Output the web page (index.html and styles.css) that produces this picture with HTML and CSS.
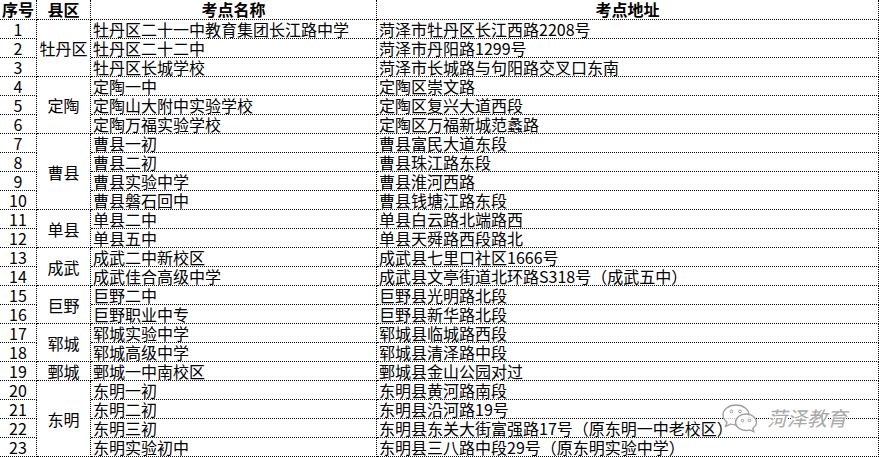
FILE: index.html
```html
<!DOCTYPE html>
<html lang="zh">
<head>
<meta charset="utf-8">
<title>考点</title>
<link rel="stylesheet" href="styles.css">
</head>
<body>
<div class="sheet">
<table class="grid">
<colgroup><col class="c1"><col class="c2"><col class="c3"><col class="c4"></colgroup>
<thead>
<tr class="head"><th>序号</th><th>县区</th><th>考点名称</th><th>考点地址</th></tr>
</thead>
<tbody>
<tr><td class="num">1</td><td class="cty" rowspan="3">牡丹区</td><td>牡丹区二十一中教育集团长江路中学</td><td>菏泽市牡丹区长江西路2208号</td></tr>
<tr><td class="num">2</td><td>牡丹区二十二中</td><td>菏泽市丹阳路1299号</td></tr>
<tr><td class="num">3</td><td>牡丹区长城学校</td><td>菏泽市长城路与句阳路交叉口东南</td></tr>
<tr><td class="num">4</td><td class="cty" rowspan="3">定陶</td><td>定陶一中</td><td>定陶区崇文路</td></tr>
<tr><td class="num">5</td><td>定陶山大附中实验学校</td><td>定陶区复兴大道西段</td></tr>
<tr><td class="num">6</td><td>定陶万福实验学校</td><td>定陶区万福新城范蠡路</td></tr>
<tr><td class="num">7</td><td class="cty" rowspan="4">曹县</td><td>曹县一初</td><td>曹县富民大道东段</td></tr>
<tr><td class="num">8</td><td>曹县二初</td><td>曹县珠江路东段</td></tr>
<tr><td class="num">9</td><td>曹县实验中学</td><td>曹县淮河西路</td></tr>
<tr><td class="num">10</td><td>曹县磐石回中</td><td>曹县钱塘江路东段</td></tr>
<tr><td class="num">11</td><td class="cty" rowspan="2">单县</td><td>单县二中</td><td>单县白云路北端路西</td></tr>
<tr><td class="num">12</td><td>单县五中</td><td>单县天舜路西段路北</td></tr>
<tr><td class="num">13</td><td class="cty" rowspan="2">成武</td><td>成武二中新校区</td><td>成武县七里口社区1666号</td></tr>
<tr><td class="num">14</td><td>成武佳合高级中学</td><td>成武县文亭街道北环路S318号（成武五中）</td></tr>
<tr><td class="num">15</td><td class="cty" rowspan="2">巨野</td><td>巨野二中</td><td>巨野县光明路北段</td></tr>
<tr><td class="num">16</td><td>巨野职业中专</td><td>巨野县新华路北段</td></tr>
<tr><td class="num">17</td><td class="cty" rowspan="2">郓城</td><td>郓城实验中学</td><td>郓城县临城路西段</td></tr>
<tr><td class="num">18</td><td>郓城高级中学</td><td>郓城县清泽路中段</td></tr>
<tr><td class="num">19</td><td class="cty">鄄城</td><td>鄄城一中南校区</td><td>鄄城县金山公园对过</td></tr>
<tr><td class="num">20</td><td class="cty" rowspan="4">东明</td><td>东明一初</td><td>东明县黄河路南段</td></tr>
<tr><td class="num">21</td><td>东明二初</td><td>东明县沿河路19号</td></tr>
<tr><td class="num">22</td><td>东明三初</td><td>东明县东关大街富强路17号（原东明一中老校区）</td></tr>
<tr><td class="num">23</td><td>东明实验初中</td><td>东明县三八路中段29号（原东明实验中学）</td></tr>
</tbody>
</table>
<div class="mark">
<svg class="mark-icon" width="38" height="30" viewBox="0 0 38 30">
<path d="M15 2 C7.5 2 2 6.5 2 12 C2 15 3.6 17.5 6 19.2 L4.6 23.5 L9.6 21 C11.3 21.6 13.1 22 15 22 C22.5 22 28 17.5 28 12 C28 6.5 22.5 2 15 2 Z" fill="rgba(255,255,255,0.7)" stroke="#9c9c9c" stroke-width="1.3"/>
<circle cx="10.5" cy="8.5" r="1.4" fill="none" stroke="#9c9c9c" stroke-width="1"/>
<circle cx="19" cy="8.5" r="1.4" fill="none" stroke="#9c9c9c" stroke-width="1"/>
<path d="M25 11 C19 11 14.5 14.8 14.5 19.3 C14.5 23.8 19 27.5 25 27.5 C26.4 27.5 27.7 27.3 28.9 26.9 L32.8 28.8 L31.8 25.3 C34 23.8 35.5 21.7 35.5 19.3 C35.5 14.8 31 11 25 11 Z" fill="rgba(255,255,255,0.85)" stroke="#9c9c9c" stroke-width="1.3"/>
<circle cx="21.5" cy="17.5" r="1.2" fill="none" stroke="#9c9c9c" stroke-width="1"/>
<circle cx="28.5" cy="17.5" r="1.2" fill="none" stroke="#9c9c9c" stroke-width="1"/>
</svg>
<span class="mark-text">菏泽教育</span>
</div>
</div>
</body>
</html>
```
FILE: styles.css
```css
html, body {
  margin: 0;
  padding: 0;
  background: #ffffff;
}
.sheet {
  position: relative;
  width: 879px;
  height: 457px;
  overflow: hidden;
}
.grid {
  border-collapse: separate;
  border-spacing: 0;
  table-layout: fixed;
  width: 879px;
  font-family: "Noto Sans CJK SC", "Noto Sans", sans-serif;
  font-size: 16px;
  color: #000;
}
.c1 { width: 37px; }
.c2 { width: 54px; }
.c3 { width: 286px; }
.c4 { width: 502px; }
.grid th,
.grid td {
  padding: 0 0 0 2px;
  border-right: 1px dotted #000;
  border-bottom: 1px dotted #000;
  white-space: nowrap;
  line-height: 18px;
  height: 18px;
  box-sizing: content-box;
  vertical-align: bottom;
  text-align: left;
}
.grid th {
  font-weight: bold;
  height: 19px;
  line-height: 19px;
  padding: 0;
  text-align: center;
  font-size: 16px;
}
.grid td.num {
  text-align: center;
  padding: 0;
}
.grid td.cty {
  text-align: center;
  vertical-align: middle;
  padding: 0;
}
.mark {
  position: absolute;
  left: 721px;
  top: 403px;
  display: flex;
  align-items: center;
  gap: 8px;
}
.mark-icon {
  display: block;
}
.mark-text {
  font-family: "Noto Sans CJK SC", sans-serif;
  font-size: 20px;
  line-height: 22px;
  font-style: italic;
  color: #a8a8a8;
  text-shadow: 0 0 1px #fff, 1px 1px 0 #fff, -1px -1px 0 #fff, 1px -1px 0 #fff, -1px 1px 0 #fff;
}
```
